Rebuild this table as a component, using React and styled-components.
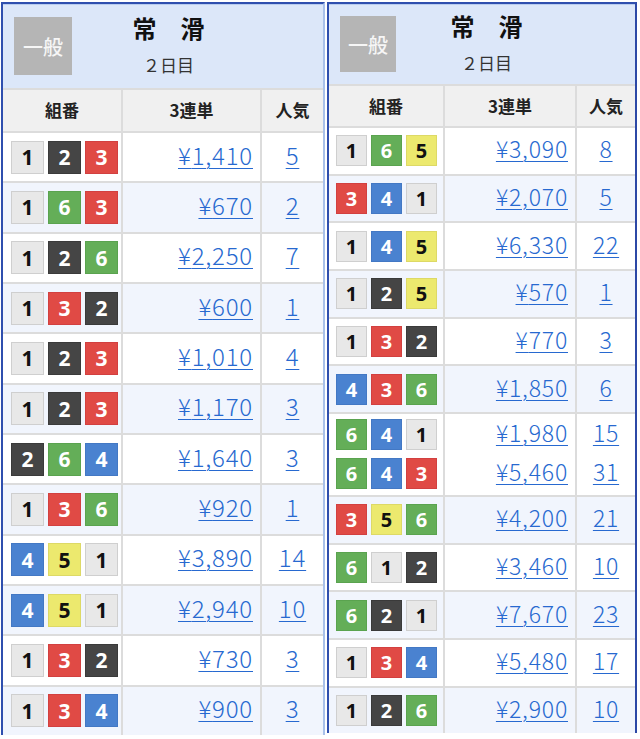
import React from 'react';
import styled, { createGlobalStyle } from 'styled-components';

const Global = createGlobalStyle`
  body {
    margin: 0;
    background: #fff;
    font-family: "Noto Sans CJK JP", "Noto Sans", sans-serif;
  }
`

const left = {
  w: 324, cols: '120px 139px 1fr', head: 84, colHead: 43, row: 50.33, badge: 58,
  headCols: '69px 1fr 58px', pad: 8, box: 33, font: 24, edge: '#a9c1ea',
  rows: [
    { b: [[1, 2, 3]], p: ['1,410'], n: ['5'] },
    { b: [[1, 6, 3]], p: ['670'], n: ['2'] },
    { b: [[1, 2, 6]], p: ['2,250'], n: ['7'] },
    { b: [[1, 3, 2]], p: ['600'], n: ['1'] },
    { b: [[1, 2, 3]], p: ['1,010'], n: ['4'] },
    { b: [[1, 2, 3]], p: ['1,170'], n: ['3'] },
    { b: [[2, 6, 4]], p: ['1,640'], n: ['3'] },
    { b: [[1, 3, 6]], p: ['920'], n: ['1'] },
    { b: [[4, 5, 1]], p: ['3,890'], n: ['14'] },
    { b: [[4, 5, 1]], p: ['2,940'], n: ['10'] },
    { b: [[1, 3, 2]], p: ['730'], n: ['3'] },
    { b: [[1, 3, 4]], p: ['900'], n: ['3'] },
  ],
}

const right = {
  w: 310, cols: '116px 132px 1fr', head: 80, colHead: 42, row: 47.67, badge: 56,
  headCols: '67px 1fr 58px', pad: 7, box: 31, font: 23, edge: '#2c48a6',
  rows: [
    { b: [[1, 6, 5]], p: ['3,090'], n: ['8'] },
    { b: [[3, 4, 1]], p: ['2,070'], n: ['5'] },
    { b: [[1, 4, 5]], p: ['6,330'], n: ['22'] },
    { b: [[1, 2, 5]], p: ['570'], n: ['1'] },
    { b: [[1, 3, 2]], p: ['770'], n: ['3'] },
    { b: [[4, 3, 6]], p: ['1,850'], n: ['6'] },
    { b: [[6, 4, 1], [6, 4, 3]], p: ['1,980', '5,460'], n: ['15', '31'], h: 83 },
    { b: [[3, 5, 6]], p: ['4,200'], n: ['21'] },
    { b: [[6, 1, 2]], p: ['3,460'], n: ['10'] },
    { b: [[6, 2, 1]], p: ['7,670'], n: ['23'] },
    { b: [[1, 3, 4]], p: ['5,480'], n: ['17'] },
    { b: [[1, 2, 6]], p: ['2,900'], n: ['10'] },
  ],
}

const boatColors = {
  1: { bg: '#e8e8e8', fg: '#111', bd: '#cfcfcf' },
  2: { bg: '#454545', fg: '#fff', bd: '#3a3a3a' },
  3: { bg: '#e04a45', fg: '#fff', bd: '#d24040' },
  4: { bg: '#4a82d0', fg: '#fff', bd: '#4378c4' },
  5: { bg: '#ece96e', fg: '#111', bd: '#ddd966' },
  6: { bg: '#64ae58', fg: '#fff', bd: '#5aa34f' },
}

const Page = styled.div`
  display: flex;
  align-items: flex-start;
  gap: 2px;
  padding: 2px 0 0 1px;
`
const Board = styled.div`
  width: ${p => p.$w}px;
  box-sizing: border-box;
  border: 2px solid #2f4fae;
  border-right-color: ${p => p.$edge};
  border-bottom: none;
  background: #fff;
`
const Header = styled.div`
  display: grid;
  grid-template-columns: ${p => p.$cols};
  align-items: center;
  height: ${p => p.$h}px;
  background: #dce7f9;
  box-shadow: inset 0 1px 0 #b9cdef;
`
const Badge = styled.div`
  width: ${p => p.$s}px;
  height: ${p => p.$s}px;
  margin-left: 11px;
  background: #b5b5b5;
  color: #f6f6f6;
  font-size: 20px;
  font-weight: 500;
  display: flex;
  align-items: center;
  justify-content: center;
`
const TitleBlock = styled.div`
  display: flex;
  flex-direction: column;
  align-items: center;
  gap: 16px;
  padding-bottom: 3px;
`
const Title = styled.div`
  font-size: 24px;
  font-weight: 700;
  color: #111;
  line-height: 1;
`
const Day = styled.div`
  font-size: 17px;
  color: #333;
  line-height: 1;
`
const Grid = styled.div`
  display: grid;
  grid-template-columns: ${p => p.$cols};
  height: ${p => p.$h}px;
  box-sizing: border-box;
  border-top: 2px solid #dcdcdc;
  background: ${p => p.$bg};
`
const HeadCell = styled.div`
  display: flex;
  align-items: center;
  justify-content: center;
  font-size: 17px;
  font-weight: 700;
  color: #222;
  padding-bottom: 2px;
  border-right: 2px solid #dcdcdc;
  &:last-child { border-right: none; }
`
const Cell = styled.div`
  display: flex;
  flex-direction: column;
  justify-content: center;
  align-items: ${p => p.$align};
  gap: 8px;
  padding: 0 ${p => p.$pad}px;
  border-right: 2px solid #dcdcdc;
  &:last-child { border-right: none; }
`
const Boxes = styled.div`
  display: flex;
  gap: 4px;
`
const Boat = styled.span`
  width: ${p => p.$s}px;
  height: ${p => p.$s}px;
  box-sizing: border-box;
  display: flex;
  align-items: center;
  justify-content: center;
  background: ${p => boatColors[p.$n].bg};
  color: ${p => boatColors[p.$n].fg};
  border: 1px solid ${p => boatColors[p.$n].bd};
  font-family: "Noto Sans", "Liberation Sans", sans-serif;
  font-weight: 700;
  font-size: ${p => Math.round(p.$s * 0.64)}px;
`
const Link = styled.a`
  color: #2769d0;
  font-size: ${p => p.$f}px;
  line-height: ${p => p.$line - 5}px;
  padding-bottom: 5px;
  letter-spacing: 0.8px;
  text-decoration: underline;
  text-decoration-thickness: 1px;
  text-underline-offset: 3px;
  font-family: "Noto Sans CJK JP", sans-serif;
  font-weight: 300;
`

function Table({ d }) {
  const line = d.box
  return <Board $w={d.w} $edge={d.edge}>
    <Header $h={d.head} $cols={d.headCols}>
      <Badge $s={d.badge}>一般</Badge>
      <TitleBlock>
        <Title>常　滑</Title>
        <Day>２日目</Day>
      </TitleBlock>
      <span />
    </Header>
    <Grid $cols={d.cols} $h={d.colHead} $bg="#f0f0f0">
      <HeadCell>組番</HeadCell>
      <HeadCell>3連単</HeadCell>
      <HeadCell>人気</HeadCell>
    </Grid>
    {d.rows.map((r, i) =>
      <Grid key={i} $cols={d.cols} $h={r.h || d.row} $bg={i % 2 ? '#f1f5fd' : '#fff'}>
        <Cell $align="flex-start" $pad={d.pad}>
          {r.b.map((set, j) => <Boxes key={j}>
            {set.map((n, k) => <Boat key={k} $n={n} $s={d.box}>{n}</Boat>)}
          </Boxes>)}
        </Cell>
        <Cell $align="flex-end" $pad={7}>
          {r.p.map((p, j) => <Link key={j} href="#" $f={d.font} $line={line}>¥{p}</Link>)}
        </Cell>
        <Cell $align="center" $pad={0}>
          {r.n.map((n, j) => <Link key={j} href="#" $f={d.font} $line={line}>{n}</Link>)}
        </Cell>
      </Grid>
    )}
  </Board>
}

export default function App() {
  return <>
    <Global />
    <Page>
      <Table d={left} />
      <Table d={right} />
    </Page>
  </>
}
